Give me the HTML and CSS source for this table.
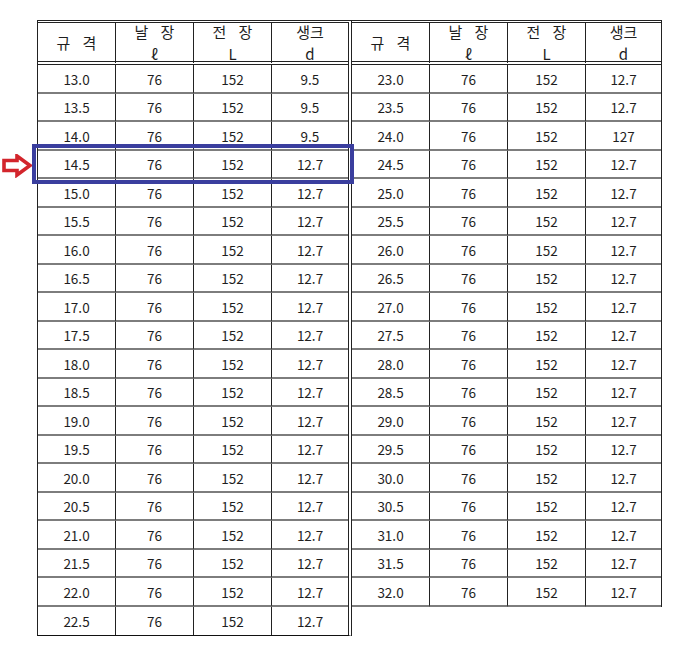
FILE: index.html
```html
<!DOCTYPE html>
<html lang="ko">
<head>
<meta charset="utf-8">
<title>규격표</title>
<link rel="stylesheet" href="styles.css">
</head>
<body>
<div class="page">
  <div class="tables">
    <div class="tbl tbl-left">
      <div class="cell head"><span class="ko">규 격</span></div>
      <div class="cell head"><span class="ko">날 장</span><span>ℓ</span></div>
      <div class="cell head"><span class="ko">전 장</span><span>L</span></div>
      <div class="cell head"><span>생크</span><span>d</span></div>
      <div class="cell">13.0</div><div class="cell">76</div><div class="cell">152</div><div class="cell">9.5</div>
      <div class="cell">13.5</div><div class="cell">76</div><div class="cell">152</div><div class="cell">9.5</div>
      <div class="cell">14.0</div><div class="cell">76</div><div class="cell">152</div><div class="cell">9.5</div>
      <div class="cell">14.5</div><div class="cell">76</div><div class="cell">152</div><div class="cell">12.7</div>
      <div class="cell">15.0</div><div class="cell">76</div><div class="cell">152</div><div class="cell">12.7</div>
      <div class="cell">15.5</div><div class="cell">76</div><div class="cell">152</div><div class="cell">12.7</div>
      <div class="cell">16.0</div><div class="cell">76</div><div class="cell">152</div><div class="cell">12.7</div>
      <div class="cell">16.5</div><div class="cell">76</div><div class="cell">152</div><div class="cell">12.7</div>
      <div class="cell">17.0</div><div class="cell">76</div><div class="cell">152</div><div class="cell">12.7</div>
      <div class="cell">17.5</div><div class="cell">76</div><div class="cell">152</div><div class="cell">12.7</div>
      <div class="cell">18.0</div><div class="cell">76</div><div class="cell">152</div><div class="cell">12.7</div>
      <div class="cell">18.5</div><div class="cell">76</div><div class="cell">152</div><div class="cell">12.7</div>
      <div class="cell">19.0</div><div class="cell">76</div><div class="cell">152</div><div class="cell">12.7</div>
      <div class="cell">19.5</div><div class="cell">76</div><div class="cell">152</div><div class="cell">12.7</div>
      <div class="cell">20.0</div><div class="cell">76</div><div class="cell">152</div><div class="cell">12.7</div>
      <div class="cell">20.5</div><div class="cell">76</div><div class="cell">152</div><div class="cell">12.7</div>
      <div class="cell">21.0</div><div class="cell">76</div><div class="cell">152</div><div class="cell">12.7</div>
      <div class="cell">21.5</div><div class="cell">76</div><div class="cell">152</div><div class="cell">12.7</div>
      <div class="cell">22.0</div><div class="cell">76</div><div class="cell">152</div><div class="cell">12.7</div>
      <div class="cell">22.5</div><div class="cell">76</div><div class="cell">152</div><div class="cell">12.7</div>
    </div>
    <div class="tbl tbl-right">
      <div class="cell head"><span class="ko">규 격</span></div>
      <div class="cell head"><span class="ko">날 장</span><span>ℓ</span></div>
      <div class="cell head"><span class="ko">전 장</span><span>L</span></div>
      <div class="cell head"><span>생크</span><span>d</span></div>
      <div class="cell">23.0</div><div class="cell">76</div><div class="cell">152</div><div class="cell">12.7</div>
      <div class="cell">23.5</div><div class="cell">76</div><div class="cell">152</div><div class="cell">12.7</div>
      <div class="cell">24.0</div><div class="cell">76</div><div class="cell">152</div><div class="cell">127</div>
      <div class="cell">24.5</div><div class="cell">76</div><div class="cell">152</div><div class="cell">12.7</div>
      <div class="cell">25.0</div><div class="cell">76</div><div class="cell">152</div><div class="cell">12.7</div>
      <div class="cell">25.5</div><div class="cell">76</div><div class="cell">152</div><div class="cell">12.7</div>
      <div class="cell">26.0</div><div class="cell">76</div><div class="cell">152</div><div class="cell">12.7</div>
      <div class="cell">26.5</div><div class="cell">76</div><div class="cell">152</div><div class="cell">12.7</div>
      <div class="cell">27.0</div><div class="cell">76</div><div class="cell">152</div><div class="cell">12.7</div>
      <div class="cell">27.5</div><div class="cell">76</div><div class="cell">152</div><div class="cell">12.7</div>
      <div class="cell">28.0</div><div class="cell">76</div><div class="cell">152</div><div class="cell">12.7</div>
      <div class="cell">28.5</div><div class="cell">76</div><div class="cell">152</div><div class="cell">12.7</div>
      <div class="cell">29.0</div><div class="cell">76</div><div class="cell">152</div><div class="cell">12.7</div>
      <div class="cell">29.5</div><div class="cell">76</div><div class="cell">152</div><div class="cell">12.7</div>
      <div class="cell">30.0</div><div class="cell">76</div><div class="cell">152</div><div class="cell">12.7</div>
      <div class="cell">30.5</div><div class="cell">76</div><div class="cell">152</div><div class="cell">12.7</div>
      <div class="cell">31.0</div><div class="cell">76</div><div class="cell">152</div><div class="cell">12.7</div>
      <div class="cell">31.5</div><div class="cell">76</div><div class="cell">152</div><div class="cell">12.7</div>
      <div class="cell">32.0</div><div class="cell">76</div><div class="cell">152</div><div class="cell">12.7</div>
    </div>
  </div>
  <svg class="arrow" width="30" height="24" viewBox="0 0 30 24" aria-hidden="true">
    <polygon points="2,6.5 15,6.5 15,2 28,11.5 15,21 15,16.5 2,16.5" fill="#fff" stroke="#d3252c" stroke-width="3.6" stroke-linejoin="miter"/>
  </svg>
  <div class="highlight"></div>
</div>
</body>
</html>
```

FILE: styles.css
```css
body {
  margin: 0;
  background: #fff;
}

.page {
  position: relative;
  width: 700px;
  height: 651px;
}

.tables {
  display: flex;
  align-items: flex-start;
  padding: 20px 0 0 37px;
}

.tbl {
  display: grid;
  border-top: 3px double #222;
  font-family: "Noto Sans CJK KR", "Noto Sans", sans-serif;
  font-size: 13.5px;
  color: #1e1e1e;
}

.tbl-left {
  grid-template-columns: 78px 78px 78px 76px;
  border-left: 1px solid #222;
  border-right: 4px double #222;
  border-bottom: 1px solid #111;
}

.tbl-right {
  grid-template-columns: 78px 78px 78px 75px;
  border-right: 1px solid #222;
}

.cell {
  box-sizing: border-box;
  height: 28.5px;
  border-bottom: 2px solid #7d7d7d;
  border-right: 1px solid #222;
  display: flex;
  align-items: center;
  justify-content: center;
  padding-top: 1px;
}

.cell:nth-child(4n) {
  border-right: none;
}

.tbl-left .cell:nth-last-child(-n+4) {
  border-bottom: none;
}

.head {
  height: 42px;
  border-bottom: 4px double #222;
  flex-direction: column;
  line-height: 22px;
  font-size: 15px;
  padding-top: 2px;
}

.ko {
  word-spacing: 8px;
}

.arrow {
  position: absolute;
  left: 2px;
  top: 154px;
}

.highlight {
  position: absolute;
  left: 32px;
  top: 144px;
  width: 322px;
  height: 40px;
  box-sizing: border-box;
  border: 4.5px solid #3a3e9e;
}
```
